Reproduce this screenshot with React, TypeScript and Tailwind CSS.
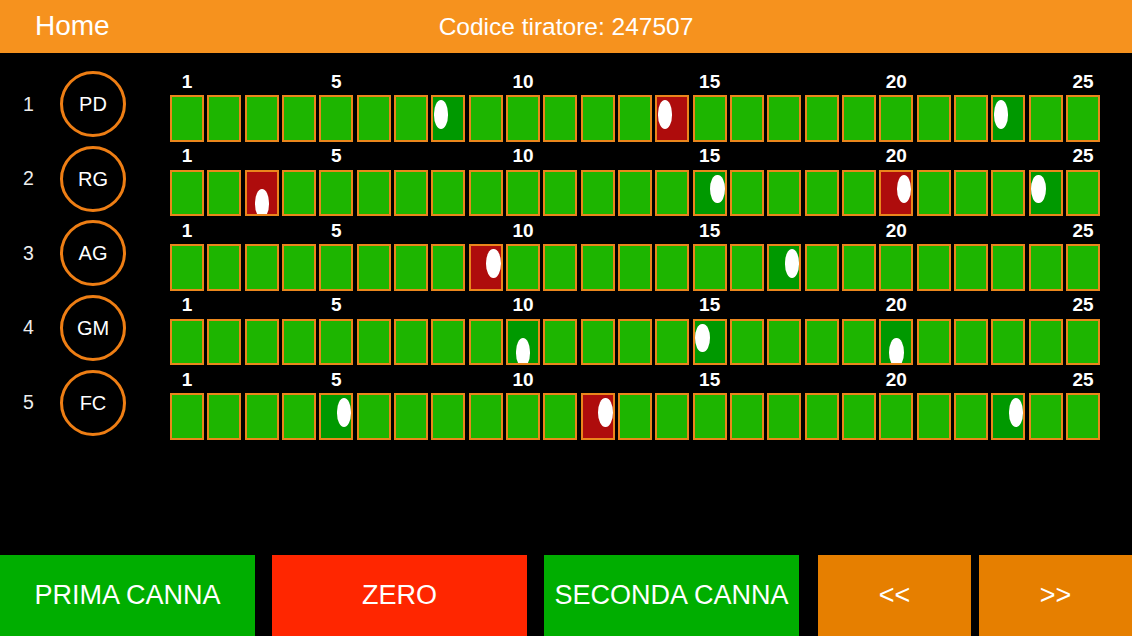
import React from "react";

type Mark = { n: number; kind: "red" | "hit"; pos: "L" | "R" | "B" };

const shooters: { id: number; init: string; marks: Mark[] }[] = [
  { id: 1, init: "PD", marks: [
    { n: 8, kind: "hit", pos: "L" },
    { n: 14, kind: "red", pos: "L" },
    { n: 23, kind: "hit", pos: "L" },
  ] },
  { id: 2, init: "RG", marks: [
    { n: 3, kind: "red", pos: "B" },
    { n: 15, kind: "hit", pos: "R" },
    { n: 20, kind: "red", pos: "R" },
    { n: 24, kind: "hit", pos: "L" },
  ] },
  { id: 3, init: "AG", marks: [
    { n: 9, kind: "red", pos: "R" },
    { n: 17, kind: "hit", pos: "R" },
  ] },
  { id: 4, init: "GM", marks: [
    { n: 10, kind: "hit", pos: "B" },
    { n: 15, kind: "hit", pos: "L" },
    { n: 20, kind: "hit", pos: "B" },
  ] },
  { id: 5, init: "FC", marks: [
    { n: 5, kind: "hit", pos: "R" },
    { n: 12, kind: "red", pos: "R" },
    { n: 23, kind: "hit", pos: "R" },
  ] },
];

const labels = [1, 5, 10, 15, 20, 25];
const nums = Array.from({ length: 25 }, (_, i) => i + 1);

function Oval({ pos }: { pos: "L" | "R" | "B" }) {
  const cls =
    pos === "L"
      ? "left-[0.5px] top-[3px]"
      : pos === "R"
      ? "right-[0px] top-[3px]"
      : "left-[8px] top-[17.5px]";
  return <div className={`absolute w-[14.5px] h-[28.5px] rounded-[50%] bg-white ${cls}`} />;
}

function Cell({ mark }: { mark?: Mark }) {
  const bg = !mark ? "bg-[#1DB500]" : mark.kind === "red" ? "bg-[#AE0C0C]" : "bg-[#009900]";
  return (
    <div className={`relative overflow-hidden border-2 border-[#EA861C] ${bg}`}>
      {mark && <Oval pos={mark.pos} />}
    </div>
  );
}

export default function App() {
  return (
    <div
      className="w-[1132px] h-[636px] bg-black flex flex-col overflow-hidden text-white"
      style={{ fontFamily: '"Liberation Sans", Arial, sans-serif' }}
    >
      <header className="h-[53px] bg-[#F6921E] grid grid-cols-[1fr_auto_1fr] items-center shrink-0">
        <div className="pl-[35px] text-[28px] leading-none pb-[2px]">Home</div>
        <div className="text-[24.5px] leading-none pt-[1px]">Codice tiratore: 247507</div>
        <div />
      </header>

      <main className="flex-1 pt-[14px] flex flex-col">
        {shooters.map((s) => (
          <div key={s.id} className="flex h-[74.6px]">
            <div className="w-[170px] flex items-center shrink-0">
              <div className="w-[57px] text-center text-[19.5px] text-[#EDEDED]">{s.id}</div>
              <div className="ml-[3px] w-[66px] h-[66px] rounded-full border-[3px] border-[#EE7E14] flex items-center justify-center text-[20px]">
                {s.init}
              </div>
            </div>
            <div className="w-[930px] flex flex-col">
              <div className="h-[28px] grid grid-cols-[repeat(25,minmax(0,1fr))] gap-x-[3.33px] items-center">
                {nums.map((n) => (
                  <div key={n} className="text-center font-bold text-[19px] leading-none whitespace-nowrap flex justify-center">
                    {labels.includes(n) ? n : ""}
                  </div>
                ))}
              </div>
              <div className="h-[46.6px] grid grid-cols-[repeat(25,minmax(0,1fr))] gap-x-[3.33px]">
                {nums.map((n) => (
                  <Cell key={n} mark={s.marks.find((m) => m.n === n)} />
                ))}
              </div>
            </div>
          </div>
        ))}
      </main>

      <footer className="h-[81px] flex shrink-0 text-[27px]">
        <button className="w-[255px] bg-[#00AE00] flex items-center justify-center">PRIMA CANNA</button>
        <button className="ml-[17px] w-[255px] bg-[#FF2600] flex items-center justify-center">ZERO</button>
        <button className="ml-[17px] w-[255px] bg-[#00AE00] flex items-center justify-center">SECONDA CANNA</button>
        <button className="ml-[19px] w-[153px] bg-[#E67F00] flex items-center justify-center">&lt;&lt;</button>
        <button className="ml-[8px] w-[153px] bg-[#E67F00] flex items-center justify-center">&gt;&gt;</button>
      </footer>
    </div>
  );
}
